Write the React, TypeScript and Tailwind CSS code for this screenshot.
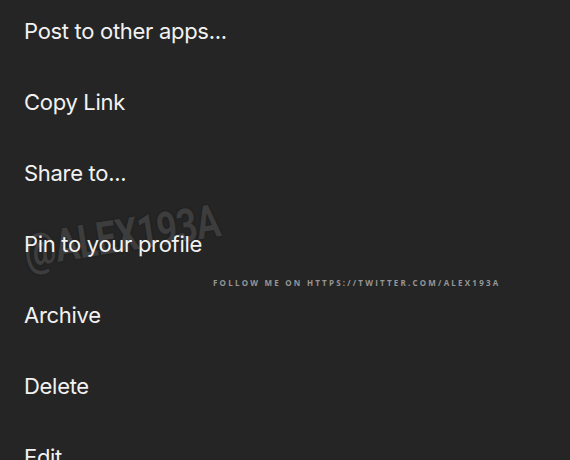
import React from "react";

const items = [
  "Post to other apps...",
  "Copy Link",
  "Share to...",
  "Pin to your profile",
  "Archive",
  "Delete",
  "Edit",
];

export default function App() {
  return (
    <div className="relative w-[570px] h-[460px] overflow-hidden bg-[#252525] font-['Inter',sans-serif]">
      <div className="absolute left-[24px] top-[217px] -rotate-[9deg] scale-x-[0.78] origin-left text-[46px] font-bold tracking-[-1px] text-[#3d3d3d] font-['Roboto',sans-serif] [text-shadow:0_0_2px_#181818]">
        @ALEX193A
      </div>
      <div className="absolute left-[213px] top-[277px] text-[8px] font-bold tracking-[2.22px] text-[#969696] font-['Open_Sans',sans-serif]">
        FOLLOW ME ON HTTPS://TWITTER.COM/ALEX193A
      </div>
      <div className="relative flex flex-col -mt-[4px] pl-[24px]">
        {items.map((label) => (
          <div key={label} className="h-[71px] flex items-center text-[22px] text-[#f2f2f2] tracking-[-0.3px]">
            {label}
          </div>
        ))}
      </div>
    </div>
  );
}
